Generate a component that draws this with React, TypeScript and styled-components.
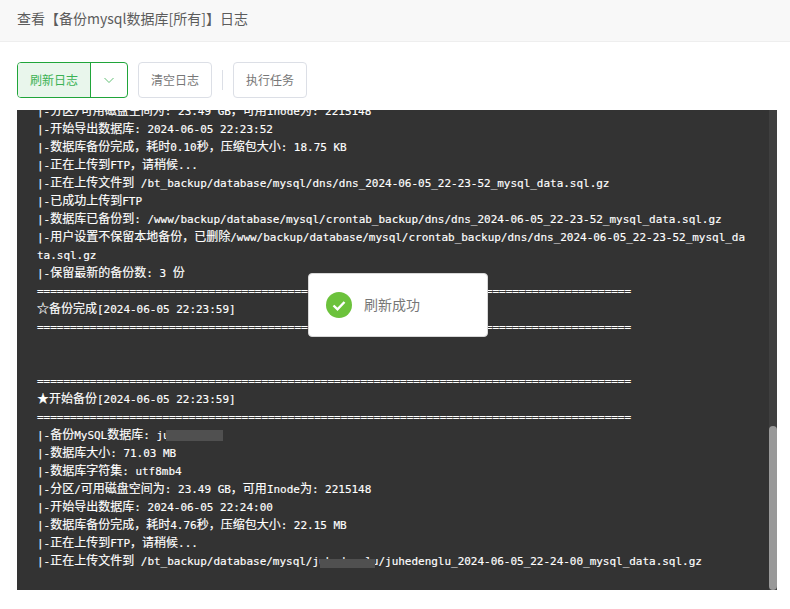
import React from 'react';
import styled, {createGlobalStyle} from 'styled-components';

const GlobalStyle = createGlobalStyle`
  html, body {
    margin: 0;
    padding: 0;
    background: #fff;
  }
  body {
    font-family: "Noto Sans CJK SC", "Liberation Sans", sans-serif;
  }
`;

const Page = styled.div`
  position: relative;
  width: 790px;
  height: 609px;
  overflow: hidden;
  display: flex;
  flex-direction: column;
`;

const Title = styled.div`
  height: 41px;
  line-height: 37px;
  padding-left: 17px;
  background: #f8f8f8;
  border-bottom: 1px solid #eee;
  font-size: 14px;
  color: #5c5c5c;
`;

const Toolbar = styled.div`
  display: flex;
  align-items: center;
  padding: 20px 0 12px 17px;
`;

const SplitButton = styled.div`
  display: flex;
  height: 36px;
  box-sizing: border-box;
  border: 1px solid #20a53a;
  border-radius: 4px;
  overflow: hidden;
  margin-right: 10px;
`;

const MainPart = styled.div`
  width: 73px;
  box-sizing: border-box;
  padding-bottom: 2px;
  display: flex;
  align-items: center;
  justify-content: center;
  background: #e9f6ec;
  border-right: 1px solid #20a53a;
  color: #3bb254;
  font-size: 12px;
`;

const CaretPart = styled.div`
  width: 36px;
  display: flex;
  align-items: center;
  justify-content: center;
`;

const PlainButton = styled.div`
  width: 74px;
  height: 36px;
  box-sizing: border-box;
  padding-bottom: 2px;
  display: flex;
  align-items: center;
  justify-content: center;
  border: 1px solid #dcdfe6;
  border-radius: 4px;
  color: #777;
  font-size: 12px;
`;

const Divider = styled.div`
  width: 1px;
  height: 20px;
  background: #dcdfe6;
  margin: 0 10px;
`;

const Console = styled.div`
  display: flex;
  width: 760px;
  height: 480px;
  margin-left: 17px;
  background: #333;
`;

const Log = styled.div`
  flex: 1;
  min-width: 0;
  display: flex;
  flex-direction: column;
  justify-content: flex-end;
  overflow: hidden;
  padding: 0 20px 19px;
  color: #fff;
  font-family: "DejaVu Sans Mono", "Liberation Mono", monospace;
  font-size: 11px;
  line-height: 18px;
  letter-spacing: -0.022px;
  -webkit-text-stroke: 0.15px #fff;
`;

const Line = styled.div`
  position: relative;
  flex: none;
  min-height: 18px;
  white-space: pre-wrap;
  word-break: break-all;
`;

const Cjk = styled.span`
  font-family: "Noto Sans CJK SC", sans-serif;
  font-size: 12px;
  line-height: 12px;
  letter-spacing: 0;
`;

const Smudge = styled.div<{ $left: number; $width: number; $top: number; $height: number }>`
  position: absolute;
  left: ${p => p.$left}px;
  top: ${p => p.$top}px;
  width: ${p => p.$width}px;
  height: ${p => p.$height}px;
  background: #505050;
  filter: blur(0.6px);
`;

const Track = styled.div`
  position: relative;
  flex: none;
  width: 8px;
  background: #3f3f3f;
`;

const Thumb = styled.div`
  position: absolute;
  left: 0;
  right: 0;
  bottom: 0;
  height: 164px;
  border-radius: 4px;
  background: #999;
`;

const Toast = styled.div`
  position: absolute;
  left: 308px;
  top: 273px;
  width: 180px;
  height: 64px;
  box-sizing: border-box;
  display: flex;
  align-items: center;
  gap: 12px;
  padding-left: 17px;
  background: #fff;
  border: 1px solid #d8d8d8;
  border-radius: 4px;
  color: #777;
  font-size: 14px;
`;

const ToastText = styled.span`
  padding-bottom: 2px;
`;

const CJK_RUN = /([\u2e80-\uffff\u2605\u2606]+)/;

function mixed(text: string) {
  return text.split(CJK_RUN).map((part, i) => (
    i % 2 === 1 ? <Cjk key={i}>{part}</Cjk> : part
  ));
}

const bar = '='.repeat(90);

const lines = [
  '|-分区/可用磁盘空间为: 23.49 GB，可用Inode为: 2215148',
  '|-开始导出数据库: 2024-06-05 22:23:52',
  '|-数据库备份完成，耗时0.10秒，压缩包大小: 18.75 KB',
  '|-正在上传到FTP，请稍候...',
  '|-正在上传文件到 /bt_backup/database/mysql/dns/dns_2024-06-05_22-23-52_mysql_data.sql.gz',
  '|-已成功上传到FTP',
  '|-数据库已备份到: /www/backup/database/mysql/crontab_backup/dns/dns_2024-06-05_22-23-52_mysql_data.sql.gz',
  '|-用户设置不保留本地备份，已删除/www/backup/database/mysql/crontab_backup/dns/dns_2024-06-05_22-23-52_mysql_data.sql.gz',
  '|-保留最新的备份数: 3 份',
  bar,
  '☆备份完成[2024-06-05 22:23:59]',
  bar,
  '',
  '',
  bar,
  '★开始备份[2024-06-05 22:23:59]',
  bar,
  '|-备份MySQL数据库: juhedenglu',
  '|-数据库大小: 71.03 MB',
  '|-数据库字符集: utf8mb4',
  '|-分区/可用磁盘空间为: 23.49 GB，可用Inode为: 2215148',
  '|-开始导出数据库: 2024-06-05 22:24:00',
  '|-数据库备份完成，耗时4.76秒，压缩包大小: 22.15 MB',
  '|-正在上传到FTP，请稍候...',
  '|-正在上传文件到 /bt_backup/database/mysql/juhedenglu/juhedenglu_2024-06-05_22-24-00_mysql_data.sql.gz',
];

// the two names that are painted over in the screenshot
const smudges: Record<number, { left: number; width: number; top: number; height: number }> = {
  17: {left: 129, width: 57, top: 3, height: 11},
  24: {left: 283, width: 55, top: 6, height: 9},
};

function App() {
  return (
    <Page>
      <GlobalStyle/>
      <Title>查看【备份mysql数据库[所有]】日志</Title>
      <Toolbar>
        <SplitButton>
          <MainPart>刷新日志</MainPart>
          <CaretPart>
            <svg width="12" height="12" viewBox="0 0 12 12" fill="none">
              <path d="M1.5 4l4.5 4.5L10.5 4" stroke="#20a53a" strokeOpacity="0.7" strokeWidth="1"/>
            </svg>
          </CaretPart>
        </SplitButton>
        <PlainButton>清空日志</PlainButton>
        <Divider/>
        <PlainButton>执行任务</PlainButton>
      </Toolbar>
      <Console>
        <Log>
          {lines.map((l, i) => (
            <Line key={i}>
              {mixed(l)}
              {smudges[i] && (
                <Smudge
                  $left={smudges[i].left}
                  $width={smudges[i].width}
                  $top={smudges[i].top}
                  $height={smudges[i].height}
                />
              )}
            </Line>
          ))}
        </Log>
        <Track><Thumb/></Track>
      </Console>
      <Toast>
        <svg width="26" height="26" viewBox="0 0 26 26">
          <circle cx="13" cy="13" r="13" fill="#6cc23c"/>
          <path d="M7.5 13.5l4 3.8 7-7.3" fill="none" stroke="#fff" strokeWidth="2.4"/>
        </svg>
        <ToastText>刷新成功</ToastText>
      </Toast>
    </Page>
  );
}

export default App;
